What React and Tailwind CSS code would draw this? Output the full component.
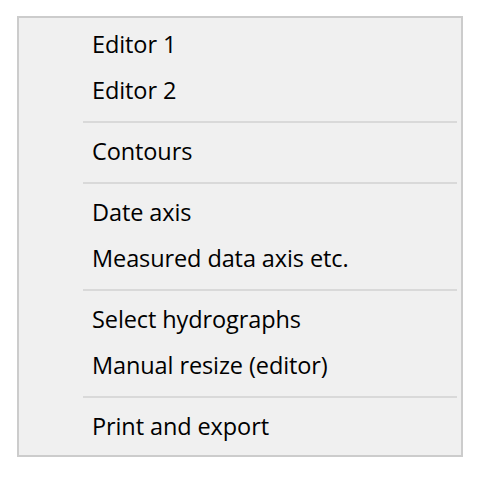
import React from 'react';

const groups = [
    ['Editor 1', 'Editor 2'],
    ['Contours'],
    ['Date axis', 'Measured data axis etc.'],
    ['Select hydrographs', 'Manual resize (editor)'],
    ['Print and export'],
];

const App = () => {
    return (
        <div className="w-[496px] h-[477px] bg-white pt-[16px] pl-[17px]" style={{ fontFamily: '"Open Sans", "Noto Sans", sans-serif' }}>
            <div className="w-[446px] h-[441px] border-2 border-[#cccccc] bg-[#f0f0f0] py-[4px] pr-[4px] flex flex-col">
                {groups.map((items, gi) => (
                    <React.Fragment key={gi}>
                        {gi > 0 && (
                            <div className="h-[15px] flex items-center pl-[64px]">
                                <div className="h-[2px] w-full bg-[#d9d9d9]" />
                            </div>
                        )}
                        {items.map((label) => (
                            <div key={label} className="h-[46px] flex items-center pl-[73px] text-[23.5px] tracking-[-0.1px] text-black">
                                {label}
                            </div>
                        ))}
                    </React.Fragment>
                ))}
            </div>
        </div>
    );
};

export default App;
